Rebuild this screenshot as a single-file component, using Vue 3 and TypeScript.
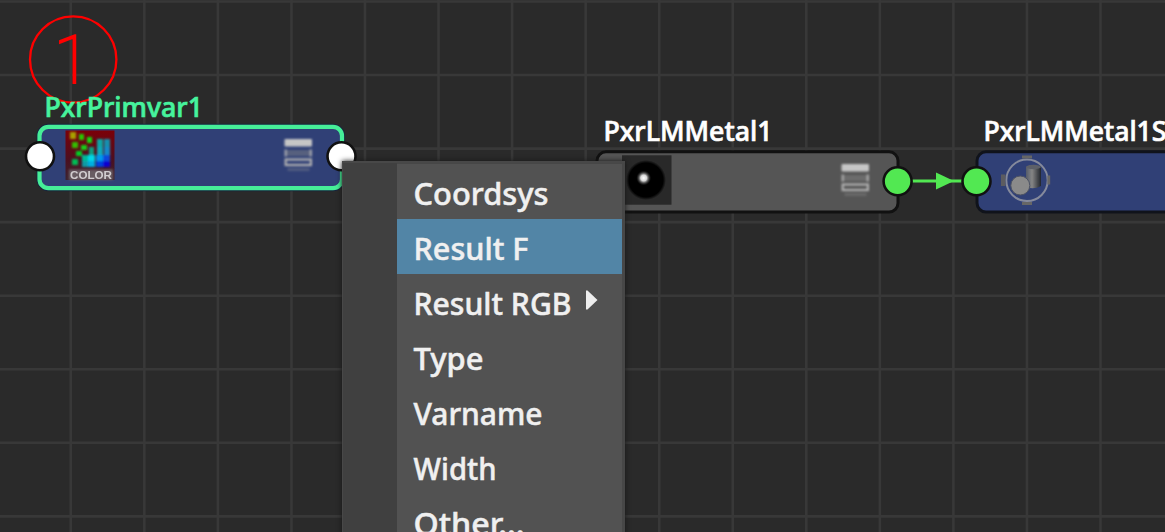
<script setup lang="ts">
interface MenuItem { label: string; width: number; active?: boolean; submenu?: boolean }

const items: MenuItem[] = [
  { label: 'Coordsys', width: 134 },
  { label: 'Result F', width: 114, active: true },
  { label: 'Result RGB', width: 157, submenu: true },
  { label: 'Type', width: 69 },
  { label: 'Varname', width: 128 },
  { label: 'Width', width: 82 },
  { label: 'Other...', width: 110 },
]
const columns = Array.from({ length: 15 }, (_, i) => 70.8 + i * 73.55)
const rows = Array.from({ length: 8 }, (_, i) => 1.5 + i * 73.55)

// Swatch cells: x, y, width, height, colour
const cells: [number, number, number, number, string][] = [
  [70, 132, 6, 7, '#a8a000'], [79, 134, 5, 6, '#2cc800'], [87, 137, 5, 6, '#16d808'],
  [72, 142, 6, 6, '#34bc00'], [81, 145, 6, 5, '#12cf18'], [76, 151, 6, 5, '#00cf24'],
  [72, 159, 6, 6, '#00bb54'], [89, 147, 5, 8, '#08a080'],
  [97, 139, 6, 8, '#0fa5a5'], [104, 139, 6, 8, '#168fae'],
  [97, 147, 6, 8, '#10a8b8'], [104, 147, 6, 8, '#1588c8'],
  [82, 155, 6, 6, '#00b998'], [88, 155, 7, 6, '#00d8e8'], [96, 155, 7, 6, '#0097ed'], [103, 155, 7, 6, '#0746dc'],
  [82, 161, 6, 6, '#099ba5'], [88, 161, 7, 6, '#05aee0'], [96, 161, 7, 6, '#0641df'], [103, 161, 7, 6, '#0900d0'],
]
</script>

<template>
  <main class="editor">
    <svg class="canvas" width="1165" height="532" viewBox="0 0 1165 532">
      <defs>
        <filter id="soft" x="-20%" y="-20%" width="140%" height="140%"><feGaussianBlur stdDeviation="0.9" /></filter>
        <filter id="slight" x="-20%" y="-20%" width="140%" height="140%"><feGaussianBlur stdDeviation="0.6" /></filter>
        <radialGradient id="ball">
          <stop offset="0" stop-color="#000" /><stop offset=".85" stop-color="#000" /><stop offset="1" stop-color="#000" stop-opacity="0" />
        </radialGradient>
        <radialGradient id="glint">
          <stop offset="0" stop-color="#fff" /><stop offset=".4" stop-color="#d8d8d8" /><stop offset="1" stop-color="#333" stop-opacity="0" />
        </radialGradient>
        <linearGradient id="swatch" x2="0" y2="1">
          <stop offset="0" stop-color="#7c0008" /><stop offset=".6" stop-color="#4b1020" /><stop offset="1" stop-color="#3c2430" />
        </linearGradient>
        <linearGradient id="cylinder">
          <stop offset="0" stop-color="#555b69" /><stop offset=".4" stop-color="#858585" /><stop offset="1" stop-color="#20242c" />
        </linearGradient>
        <g id="rows-icon">
          <rect x="0" y="0" width="27.5" height="7.5" rx="1" fill="#c6c6c6" />
          <rect x="2" y="11" width="24" height="6" fill="#888" fill-opacity=".45" />
          <path d="M1.2 10.5v7M26.3 10.5v7" stroke="#b8b8b8" stroke-opacity=".8" stroke-width="2.4" />
          <rect x="1.2" y="20.5" width="25.2" height="5.5" fill="none" stroke="#b2b2b2" stroke-width="2.2" />
          <rect x="3" y="29" width="22" height="3" fill="#999" fill-opacity=".3" />
        </g>
      </defs>

      <g class="grid">
        <line v-for="x in columns" :key="'x' + x" :x1="x" :x2="x" y1="0" y2="532" />
        <line v-for="y in rows" :key="'y' + y" x1="0" x2="1165" :y1="y" :y2="y" />
      </g>

      <circle cx="73.2" cy="59.5" r="43.2" fill="none" stroke="#f00" stroke-width="2.3" />
      <text class="marker" x="54" y="83">1</text>

      <rect x="39.5" y="126.8" width="302.5" height="61.4" rx="9" fill="#304076" stroke="#172640" stroke-width="6" />
      <rect x="39.5" y="126.8" width="302.5" height="61.4" rx="9" fill="#304076" stroke="#46ee98" stroke-width="4.2" />
      <text class="title selected" x="44.5" y="116.6" textLength="158.5" lengthAdjust="spacingAndGlyphs">PxrPrimvar1</text>
      <rect x="65.5" y="130.5" width="49" height="49.5" fill="url(#swatch)" />
      <g filter="url(#soft)">
        <rect v-for="(c, i) in cells" :key="i" :x="c[0]" :y="c[1]" :width="c[2]" :height="c[3]" :fill="c[4]" />
      </g>
      <rect x="69" y="169.5" width="44" height="10.5" fill="#685c62" filter="url(#soft)" />
      <text class="swatch-label" x="70" y="179" textLength="42" lengthAdjust="spacingAndGlyphs" filter="url(#slight)">COLOR</text>
      <use href="#rows-icon" x="284.5" y="139" filter="url(#soft)" />
      <circle cx="40" cy="156.2" r="14" fill="#fff" stroke="#111" stroke-width="2.6" />
      <circle cx="341.5" cy="156.2" r="14" fill="#fff" stroke="#111" stroke-width="2.6" />

      <rect x="597" y="151.8" width="301" height="60.2" rx="9" fill="#555" stroke="#111" stroke-width="3" />
      <text class="title" x="603.5" y="141.3" textLength="169" lengthAdjust="spacingAndGlyphs">PxrLMMetal1</text>
      <rect x="622" y="155.3" width="49.5" height="49.4" fill="#292929" />
      <circle cx="646" cy="180" r="20" fill="url(#ball)" />
      <circle cx="643.7" cy="178" r="7.5" fill="url(#glint)" />
      <use href="#rows-icon" x="841.5" y="164" filter="url(#soft)" />

      <rect x="977" y="151.8" width="220" height="60.2" rx="9" fill="#304076" stroke="#10131b" stroke-width="3" />
      <text class="title" x="983.5" y="141.3" textLength="183" lengthAdjust="spacingAndGlyphs">PxrLMMetal1S</text>
      <g filter="url(#slight)">
        <circle cx="1027" cy="180.3" r="20.7" fill="none" stroke="#858a9c" stroke-width="2" />
        <path d="M1003.2 174.5v11.5" stroke="#5c5c60" stroke-width="4.5" />
        <path d="M1022 157h10M1022 203.5h10M1048.8 175.5v9" stroke="#666" stroke-width="2.8" />
        <path d="M1026 167q7.5-4 15 0v19q-7 4-15 1z" fill="url(#cylinder)" />
        <ellipse cx="1033.5" cy="167" rx="7.5" ry="2.2" fill="#5d6067" />
        <circle cx="1020.3" cy="185.5" r="9.5" fill="#8a8a8a" stroke="#4d5364" stroke-width="1" />
      </g>

      <path d="M912 181h52" stroke="#52e852" stroke-width="3.2" />
      <path d="M936 172.5l18 8.5-18 8.5z" fill="#52e852" />
      <circle cx="897.6" cy="181.2" r="14" fill="#52e852" stroke="#111" stroke-width="2.6" />
      <circle cx="976.5" cy="181.2" r="14" fill="#52e852" stroke="#111" stroke-width="2.6" />
    </svg>

    <nav class="menu">
      <div v-for="item in items" :key="item.label" class="item" :class="{ active: item.active }">
        <svg width="225" height="55" viewBox="0 0 225 55">
          <text class="item-label" x="16.5" y="40.9" :textLength="item.width + 1" lengthAdjust="spacingAndGlyphs">{{ item.label }}</text>
          <path v-if="item.submenu" d="M189 16.5h1.5l10 9.5-10 9.5h-1.5z" fill="#eee" />
        </svg>
      </div>
    </nav>
  </main>
</template>

<style scoped>
.editor { position: relative; width: 1165px; height: 532px; overflow: hidden; background: #2a2a2a; font-family: "Noto Sans", "Open Sans", sans-serif; }
.canvas { display: block; }
.grid line { stroke: #383838; stroke-width: 2.6; }
.marker { font: 100 66px Roboto, sans-serif; fill: #f00; stroke: #f00; stroke-width: 2; }
.title { font-size: 27px; font-weight: 500; fill: #fff; stroke: #fff; stroke-width: 0.7; }
.title.selected { fill: #46f39d; stroke: #46f39d; }
.swatch-label { font: 700 11px "Liberation Sans", sans-serif; fill: #d2cdd0; }
.menu { position: absolute; left: 342px; top: 160.5px; width: 282.5px; height: 400px; box-sizing: border-box; padding: 3px 2.5px 0 55px; background: linear-gradient(90deg, #404040 55px, #474747 55px); box-shadow: inset 1px 2px #484848, 0 0 5px #151515; }
.item { height: 55px; background: #525252; }
.item.active { background: #5285a6; }
.item svg { display: block; }
.item-label { font-size: 31px; font-weight: 500; fill: #f0f0f0; stroke: #f0f0f0; stroke-width: 0.5; }
</style>

<style>
body { margin: 0; background: #2a2a2a; }
</style>
